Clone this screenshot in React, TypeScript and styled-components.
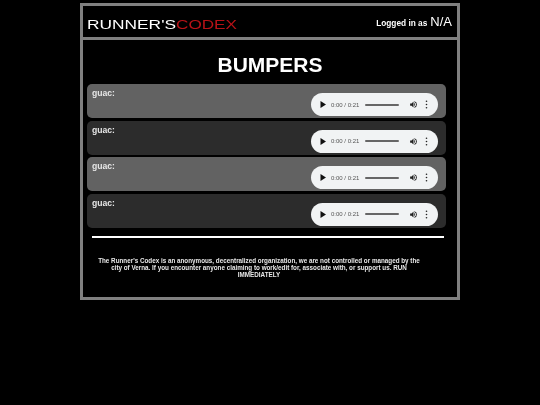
import { createGlobalStyle } from 'styled-components'
import styled from 'styled-components'

const GlobalStyle = createGlobalStyle`
  html, body {
    margin: 0;
    padding: 0;
    background: #000;
    font-family: "Liberation Sans", Arial, sans-serif;
    color: #fff;
  }
`

const Page = styled.div`
  width: 380px;
  height: 297px;
  margin: 3px auto 0;
  box-sizing: border-box;
  border: 3px solid #808080;
  display: flex;
  flex-direction: column;
  will-change: transform;
`

const Header = styled.header`
  height: 31px;
  flex: none;
  border-bottom: 3px solid #808080;
  display: flex;
  align-items: center;
  justify-content: space-between;
  padding: 0 5px 0 4px;
`

const Logo = styled.svg`
  display: block;
  width: 152px;
  height: 22px;
`

const LoginText = styled.div`
  font-size: 8.3px;
  font-weight: bold;
  display: flex;
  align-items: baseline;
  gap: 3px;
`

const LoginName = styled.span`
  font-size: 13px;
  font-weight: normal;
`

const Main = styled.main`
  flex: 1;
  padding: 0 11px 0 4px;
  display: flex;
  flex-direction: column;
`

const Title = styled.h1`
  margin: 11px 0 6px;
  font-size: 21px;
  line-height: 27px;
  font-weight: bold;
  text-align: center;
  padding-left: 7px;
`

const TrackList = styled.div`
  display: flex;
  flex-direction: column;
  gap: 2.6px;
`

const Track = styled.div<{ $light: boolean }>`
  height: 34px;
  box-sizing: border-box;
  border-radius: 5px;
  background: ${({ $light }) => ($light ? '#626262' : '#2c2c2c')};
  padding: 4px 8px 0 5px;
  display: flex;
  justify-content: space-between;
`

const TrackName = styled.span`
  font-size: 8.6px;
  font-weight: bold;
  line-height: 11px;
  color: #e6e6e6;
`

const Player = styled.div`
  width: 127px;
  height: 23px;
  margin-top: 5px;
  border-radius: 12px;
  background: #f1f3f4;
  display: flex;
  align-items: center;
  padding: 0 8px 0 9px;
  box-sizing: border-box;
  color: #222;
`

const PlayIcon = styled.svg`
  width: 6px;
  height: 7px;
  flex: none;
`

const TimeText = styled.span`
  font-size: 6px;
  color: #555;
  margin-left: 5px;
  white-space: nowrap;
`

const Progress = styled.div`
  width: 34px;
  height: 2px;
  border-radius: 1px;
  background: #666;
  margin-left: 6px;
  flex: none;
`

const VolumeIcon = styled.svg`
  width: 9px;
  height: 9px;
  margin-left: 10px;
  flex: none;
`

const MenuIcon = styled.svg`
  width: 7px;
  height: 9px;
  margin-left: 5px;
  flex: none;
`

const Divider = styled.hr`
  margin: 8px 2px 0 5px;
  height: 2px;
  border: none;
  background: #fff;
`

const FooterNote = styled.p`
  margin: 19px 22px 0 7px;
  font-size: 6.3px;
  line-height: 7.3px;
  font-weight: bold;
  text-align: center;
  color: #e8e8e8;
`

const TRACKS = ['guac:', 'guac:', 'guac:', 'guac:']

const AudioPlayer = () => (
  <Player>
    <PlayIcon viewBox="0 0 6 7">
      <path d="M0.5 0v7L6 3.5z" fill="#111" />
    </PlayIcon>
    <TimeText>0:00 / 0:21</TimeText>
    <Progress />
    <VolumeIcon viewBox="0 0 24 24">
      <path
        fill="#222"
        d="M3 9v6h4l5 5V4L7 9H3zm13.5 3A4.5 4.5 0 0 0 14 8v8a4.5 4.5 0 0 0 2.5-4zM14 3.2v2.1a7 7 0 0 1 0 13.4v2.1a9 9 0 0 0 0-17.6z"
      />
    </VolumeIcon>
    <MenuIcon viewBox="0 0 7 9">
      <circle cx="3.5" cy="1.3" r="0.8" fill="#222" />
      <circle cx="3.5" cy="4.5" r="0.8" fill="#222" />
      <circle cx="3.5" cy="7.7" r="0.8" fill="#222" />
    </MenuIcon>
  </Player>
)

export default function App() {
  return (
    <>
      <GlobalStyle />
      <Page>
        <Header>
          <Logo viewBox="0 0 152 22">
            <text x="0" y="18" fontSize="13" fill="#fff" textLength="89" lengthAdjust="spacingAndGlyphs" fontFamily="Liberation Sans">
              RUNNER'S
            </text>
            <text x="89" y="18" fontSize="13" fill="#b81217" textLength="61" lengthAdjust="spacingAndGlyphs" fontFamily="Liberation Sans">
              CODEX
            </text>
          </Logo>
          <LoginText>
            Logged in as <LoginName>N/A</LoginName>
          </LoginText>
        </Header>
        <Main>
          <Title>BUMPERS</Title>
          <TrackList>
            {TRACKS.map((name, i) => (
              <Track key={i} $light={i % 2 === 0}>
                <TrackName>{name}</TrackName>
                <AudioPlayer />
              </Track>
            ))}
          </TrackList>
          <Divider />
          <FooterNote>
            The Runner's Codex is an anonymous, decentralized organization, we are not controlled or managed by the city of
            Verna. If you encounter anyone claiming to work/edit for, associate with, or support us. RUN IMMEDIATELY
          </FooterNote>
        </Main>
      </Page>
    </>
  )
}
